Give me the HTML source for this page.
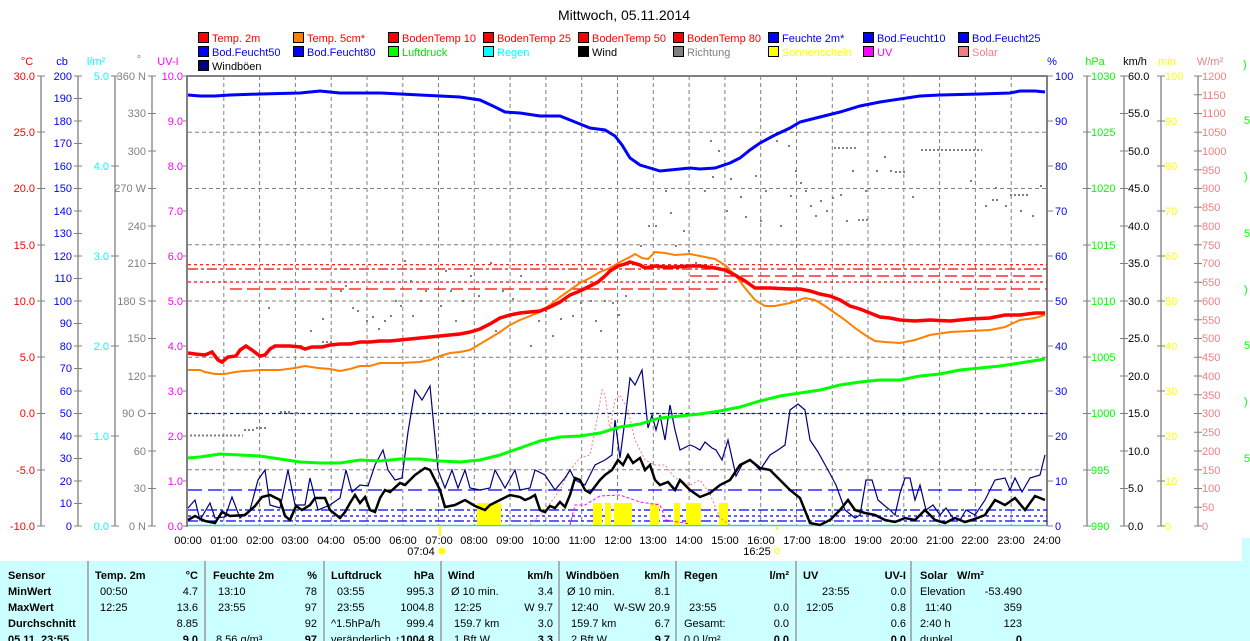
<!DOCTYPE html>
<html><head><meta charset="utf-8"><style>
html,body{margin:0;padding:0;background:#fff;width:1250px;height:641px;overflow:hidden}
svg{display:block}
text{font-family:"Liberation Sans",Arial,sans-serif;font-size:11px}
.b{font-weight:bold}
</style></head><body>
<svg width="1250" height="641" viewBox="0 0 1250 641">
<text x="624" y="20" text-anchor="middle" font-size="14" style="font-size:14px">Mittwoch, 05.11.2014</text>

<!-- legend -->
<g stroke="#000" stroke-width="1">
<rect x="198.5" y="32.5" width="10" height="10" fill="#f00"/><rect x="293.5" y="32.5" width="10" height="10" fill="#ff8000"/><rect x="388.5" y="32.5" width="10" height="10" fill="#f00"/><rect x="483.5" y="32.5" width="10" height="10" fill="#f00"/><rect x="578.5" y="32.5" width="10" height="10" fill="#f00"/><rect x="673.5" y="32.5" width="10" height="10" fill="#f00"/><rect x="768.5" y="32.5" width="10" height="10" fill="#00f"/><rect x="863.5" y="32.5" width="10" height="10" fill="#00f"/><rect x="958.5" y="32.5" width="10" height="10" fill="#00f"/>
<rect x="198.5" y="46.5" width="10" height="10" fill="#00f"/><rect x="293.5" y="46.5" width="10" height="10" fill="#00f"/><rect x="388.5" y="46.5" width="10" height="10" fill="#0f0"/><rect x="483.5" y="46.5" width="10" height="10" fill="#0ff"/><rect x="578.5" y="46.5" width="10" height="10" fill="#000"/><rect x="673.5" y="46.5" width="10" height="10" fill="#808080"/><rect x="768.5" y="46.5" width="10" height="10" fill="#ff0"/><rect x="863.5" y="46.5" width="10" height="10" fill="#f0f"/><rect x="958.5" y="46.5" width="10" height="10" fill="#f08080"/>
<rect x="198.5" y="60.5" width="10" height="10" fill="#000080"/>
</g>
<g>
<text x="212" y="42" fill="#f00">Temp. 2m</text><text x="307" y="42" fill="#f00">Temp. 5cm*</text><text x="402" y="42" fill="#f00">BodenTemp 10</text><text x="497" y="42" fill="#f00">BodenTemp 25</text><text x="592" y="42" fill="#f00">BodenTemp 50</text><text x="687" y="42" fill="#f00">BodenTemp 80</text><text x="782" y="42" fill="#00f">Feuchte 2m*</text><text x="877" y="42" fill="#00f">Bod.Feucht10</text><text x="972" y="42" fill="#00f">Bod.Feucht25</text>
<text x="212" y="56" fill="#00f">Bod.Feucht50</text><text x="307" y="56" fill="#00f">Bod.Feucht80</text><text x="402" y="56" fill="#0d0">Luftdruck</text><text x="497" y="56" fill="#0ff">Regen</text><text x="592" y="56" fill="#000">Wind</text><text x="687" y="56" fill="#808080">Richtung</text><text x="782" y="56" fill="#ff0">Sonnenschein</text><text x="877" y="56" fill="#f0f">UV</text><text x="972" y="56" fill="#f08080">Solar</text>
<text x="212" y="70" fill="#000">Windböen</text>
</g>

<!-- axis titles -->
<text x="27" y="65" fill="#f00" text-anchor="middle">°C</text>
<text x="62" y="65" fill="#00f" text-anchor="middle">cb</text>
<text x="96" y="65" fill="#0ff" text-anchor="middle">l/m²</text>
<text x="139" y="63" fill="#808080" text-anchor="middle">°</text>
<text x="168" y="65" fill="#f0f" text-anchor="middle">UV-I</text>
<text x="1052" y="65" fill="#00f" text-anchor="middle">%</text>
<text x="1095" y="65" fill="#0f0" text-anchor="middle">hPa</text>
<text x="1135" y="65" fill="#000" text-anchor="middle">km/h</text>
<text x="1167" y="65" fill="#ff0" text-anchor="middle">min</text>
<text x="1210" y="65" fill="#f08080" text-anchor="middle">W/m²</text>

<!-- axis lines -->
<g stroke="#808080" stroke-width="1.3">
<line x1="41" y1="76" x2="41" y2="526"/><line x1="78" y1="76" x2="78" y2="526"/><line x1="115" y1="76" x2="115" y2="526"/><line x1="152" y1="76" x2="152" y2="526"/>
<line x1="1087" y1="76" x2="1087" y2="526"/><line x1="1124" y1="76" x2="1124" y2="526"/><line x1="1161" y1="76" x2="1161" y2="526"/><line x1="1198" y1="76" x2="1198" y2="526"/>
</g>
<!-- left °C ticks -->
<g stroke="#808080">
<path d="M37 76h8M37 132h8M37 188.5h8M37 245h8M37 301h8M37 357h8M37 413.5h8M37 470h8M37 526h8"/>
<path d="M74 76h8M74 98.5h8M74 121h8M74 143.5h8M74 166h8M74 188.5h8M74 211h8M74 233.5h8M74 256h8M74 278.5h8M74 301h8M74 323.5h8M74 346h8M74 368.5h8M74 391h8M74 413.5h8M74 436h8M74 458.5h8M74 481h8M74 503.5h8M74 526h8"/>
<path d="M111 76h8M111 166h8M111 256h8M111 346h8M111 436h8M111 526h8"/>
<path d="M148 76h8M148 113.5h8M148 151h8M148 188.5h8M148 226h8M148 263.5h8M148 301h8M148 338.5h8M148 376h8M148 413.5h8M148 451h8M148 488.5h8M148 526h8"/>
<path d="M183 76h5M183 121h5M183 166h5M183 211h5M183 256h5M183 301h5M183 346h5M183 391h5M183 436h5M183 481h5M183 526h5"/>
<path d="M1047 76h6M1047 121h6M1047 166h6M1047 211h6M1047 256h6M1047 301h6M1047 346h6M1047 391h6M1047 436h6M1047 481h6M1047 526h6"/>
<path d="M1083 76h8M1083 132h8M1083 188.5h8M1083 245h8M1083 301h8M1083 357h8M1083 413.5h8M1083 470h8M1083 526h8"/>
<path d="M1120 76h8M1120 113.5h8M1120 151h8M1120 188.5h8M1120 226h8M1120 263.5h8M1120 301h8M1120 338.5h8M1120 376h8M1120 413.5h8M1120 451h8M1120 488.5h8M1120 526h8"/>
<path d="M1157 76h8M1157 121h8M1157 166h8M1157 211h8M1157 256h8M1157 301h8M1157 346h8M1157 391h8M1157 436h8M1157 481h8M1157 526h8"/>
<path d="M1194 76h8M1194 94.75h8M1194 113.5h8M1194 132.25h8M1194 151h8M1194 169.75h8M1194 188.5h8M1194 207.25h8M1194 226h8M1194 244.75h8M1194 263.5h8M1194 282.25h8M1194 301h8M1194 319.75h8M1194 338.5h8M1194 357.25h8M1194 376h8M1194 394.75h8M1194 413.5h8M1194 432.25h8M1194 451h8M1194 469.75h8M1194 488.5h8M1194 507.25h8M1194 526h8"/>
</g>
<!-- left labels -->
<g fill="#f00" text-anchor="end">
<text x="35" y="80">30.0</text><text x="35" y="136">25.0</text><text x="35" y="192">20.0</text><text x="35" y="249">15.0</text><text x="35" y="305">10.0</text><text x="35" y="361">5.0</text><text x="35" y="417">0.0</text><text x="35" y="474">-5.0</text><text x="35" y="530">-10.0</text>
</g>
<g fill="#00f" text-anchor="end">
<text x="72" y="80">200</text><text x="72" y="102">190</text><text x="72" y="125">180</text><text x="72" y="147">170</text><text x="72" y="170">160</text><text x="72" y="192">150</text><text x="72" y="215">140</text><text x="72" y="237">130</text><text x="72" y="260">120</text><text x="72" y="282">110</text><text x="72" y="305">100</text><text x="72" y="327">90</text><text x="72" y="350">80</text><text x="72" y="372">70</text><text x="72" y="395">60</text><text x="72" y="417">50</text><text x="72" y="440">40</text><text x="72" y="462">30</text><text x="72" y="485">20</text><text x="72" y="507">10</text><text x="72" y="530">0</text>
</g>
<g fill="#0ff" text-anchor="end">
<text x="109" y="80">5.0</text><text x="109" y="170">4.0</text><text x="109" y="260">3.0</text><text x="109" y="350">2.0</text><text x="109" y="440">1.0</text><text x="109" y="530">0.0</text>
</g>
<g fill="#808080" text-anchor="end">
<text x="146" y="80">360 N</text><text x="146" y="117">330</text><text x="146" y="155">300</text><text x="146" y="192">270 W</text><text x="146" y="230">240</text><text x="146" y="267">210</text><text x="146" y="305">180 S</text><text x="146" y="342">150</text><text x="146" y="380">120</text><text x="146" y="417">90 O</text><text x="146" y="455">60</text><text x="146" y="492">30</text><text x="146" y="530">0 N</text>
</g>
<g fill="#f0f" text-anchor="end">
<text x="183" y="80">10.0</text><text x="183" y="125">9.0</text><text x="183" y="170">8.0</text><text x="183" y="215">7.0</text><text x="183" y="260">6.0</text><text x="183" y="305">5.0</text><text x="183" y="350">4.0</text><text x="183" y="395">3.0</text><text x="183" y="440">2.0</text><text x="183" y="485">1.0</text><text x="183" y="530">0.0</text>
</g>
<!-- right labels -->
<g fill="#00f">
<text x="1055" y="80">100</text><text x="1055" y="125">90</text><text x="1055" y="170">80</text><text x="1055" y="215">70</text><text x="1055" y="260">60</text><text x="1055" y="305">50</text><text x="1055" y="350">40</text><text x="1055" y="395">30</text><text x="1055" y="440">20</text><text x="1055" y="485">10</text><text x="1055" y="530">0</text>
</g>
<g fill="#0f0">
<text x="1091" y="80">1030</text><text x="1091" y="136">1025</text><text x="1091" y="192">1020</text><text x="1091" y="249">1015</text><text x="1091" y="305">1010</text><text x="1091" y="361">1005</text><text x="1091" y="417">1000</text><text x="1091" y="474">995</text><text x="1091" y="530">990</text>
<text x="1243" y="68">)</text><text x="1244" y="124">5</text><text x="1244" y="180">)</text><text x="1244" y="237">5</text><text x="1244" y="293">)</text><text x="1244" y="349">5</text><text x="1244" y="405">)</text><text x="1244" y="462">5</text>
</g>
<g fill="#000">
<text x="1128" y="80">60.0</text><text x="1128" y="117">55.0</text><text x="1128" y="155">50.0</text><text x="1128" y="192">45.0</text><text x="1128" y="230">40.0</text><text x="1128" y="267">35.0</text><text x="1128" y="305">30.0</text><text x="1128" y="342">25.0</text><text x="1128" y="380">20.0</text><text x="1128" y="417">15.0</text><text x="1128" y="455">10.0</text><text x="1128" y="492">5.0</text><text x="1128" y="530">0.0</text>
</g>
<g fill="#ff0">
<text x="1165" y="80">100</text><text x="1165" y="125">90</text><text x="1165" y="170">80</text><text x="1165" y="215">70</text><text x="1165" y="260">60</text><text x="1165" y="305">50</text><text x="1165" y="350">40</text><text x="1165" y="395">30</text><text x="1165" y="440">20</text><text x="1165" y="485">10</text><text x="1165" y="530">0</text>
</g>
<g fill="#f08080">
<text x="1202" y="80">1200</text><text x="1202" y="99">1150</text><text x="1202" y="117">1100</text><text x="1202" y="136">1050</text><text x="1202" y="155">1000</text><text x="1202" y="174">950</text><text x="1202" y="192">900</text><text x="1202" y="211">850</text><text x="1202" y="230">800</text><text x="1202" y="249">750</text><text x="1202" y="267">700</text><text x="1202" y="286">650</text><text x="1202" y="305">600</text><text x="1202" y="324">550</text><text x="1202" y="342">500</text><text x="1202" y="361">450</text><text x="1202" y="380">400</text><text x="1202" y="399">350</text><text x="1202" y="417">300</text><text x="1202" y="436">250</text><text x="1202" y="455">200</text><text x="1202" y="474">150</text><text x="1202" y="492">100</text><text x="1202" y="511">50</text><text x="1202" y="530">0</text>
</g>

<!-- grid -->
<g stroke="#808080" stroke-dasharray="4,3" stroke-width="1">
<path d="M223.8 76V526M259.6 76V526M295.4 76V526M331.2 76V526M367 76V526M402.8 76V526M438.5 76V526M474.3 76V526M510.1 76V526M545.9 76V526M581.7 76V526M617.5 76V526M653.3 76V526M689.1 76V526M724.9 76V526M760.7 76V526M796.5 76V526M832.3 76V526M868 76V526M903.8 76V526M939.6 76V526M975.4 76V526M1011.2 76V526"/>
<path d="M188 132.3H1047M188 188.5H1047M188 244.8H1047M188 301H1047M188 357.3H1047M188 413.5H1047M188 469.8H1047"/>
</g>
<!-- frame -->
<path d="M187 75V527M188 76H1047V526" stroke="#808080" stroke-width="2" fill="none"/>
<line x1="188" y1="525.5" x2="1047" y2="525.5" stroke="#4cc" stroke-width="1.5"/>

<!-- horizontal reference dashes -->
<g fill="none" stroke-width="1.2">
<line x1="188" y1="264.7" x2="1047" y2="264.7" stroke="#f00" stroke-dasharray="3,3"/>
<line x1="188" y1="269" x2="1047" y2="269" stroke="#f00" stroke-dasharray="10,3,3,3"/>
<line x1="690" y1="276" x2="1047" y2="276" stroke="#f00" stroke-dasharray="12,5"/>
<line x1="188" y1="282" x2="1047" y2="282" stroke="#f00" stroke-dasharray="3,3"/>
<line x1="230" y1="289" x2="718" y2="289" stroke="#f00" stroke-dasharray="12,5"/>
<line x1="960" y1="289" x2="1047" y2="289" stroke="#f00" stroke-dasharray="12,5"/>
<line x1="188" y1="413.5" x2="1047" y2="413.5" stroke="#00f" stroke-dasharray="3,3"/>
<line x1="188" y1="490" x2="1047" y2="490" stroke="#00f" stroke-dasharray="14,6"/>
<line x1="188" y1="510" x2="1047" y2="510" stroke="#00f" stroke-dasharray="10,3,3,3"/>
<line x1="188" y1="516" x2="1047" y2="516" stroke="#00f" stroke-dasharray="3,3"/>
<line x1="188" y1="521" x2="1047" y2="521" stroke="#00f" stroke-dasharray="10,3,3,3"/>
</g>

<!-- Richtung gray dots -->
<g stroke="#808080" stroke-width="2" stroke-dasharray="2,2" fill="none">
<path d="M190 435.5H243M244 430H255M256 428H266M280 412H292M296 413H299M322 342H334M834 148H856M921 150H982M895 172H907M858 220H870M992 200H1000M1010 195H1030"/>
</g>
<g fill="#808080">
<rect x="268" y="307" width="2" height="2"/><rect x="300" y="345" width="2" height="2"/><rect x="310" y="330" width="2" height="2"/><rect x="322" y="318" width="2" height="2"/><rect x="330" y="300" width="2" height="2"/><rect x="340" y="290" width="2" height="2"/><rect x="345" y="285" width="2" height="2"/><rect x="352" y="307" width="2" height="2"/><rect x="357" y="310" width="2" height="2"/><rect x="366" y="320" width="2" height="2"/><rect x="372" y="316" width="2" height="2"/><rect x="378" y="328" width="2" height="2"/><rect x="384" y="320" width="2" height="2"/><rect x="390" y="315" width="2" height="2"/><rect x="395" y="300" width="2" height="2"/><rect x="400" y="305" width="2" height="2"/><rect x="404" y="260" width="2" height="2"/><rect x="410" y="280" width="2" height="2"/><rect x="412" y="315" width="2" height="2"/><rect x="420" y="300" width="2" height="2"/><rect x="425" y="290" width="2" height="2"/><rect x="430" y="264" width="2" height="2"/><rect x="440" y="305" width="2" height="2"/><rect x="445" y="270" width="2" height="2"/><rect x="450" y="290" width="2" height="2"/><rect x="455" y="320" width="2" height="2"/><rect x="462" y="300" width="2" height="2"/><rect x="470" y="275" width="2" height="2"/><rect x="478" y="295" width="2" height="2"/><rect x="490" y="262" width="2" height="2"/><rect x="495" y="330" width="2" height="2"/><rect x="502" y="290" width="2" height="2"/><rect x="512" y="298" width="2" height="2"/><rect x="520" y="275" width="2" height="2"/><rect x="530" y="345" width="2" height="2"/><rect x="538" y="320" width="2" height="2"/><rect x="545" y="310" width="2" height="2"/><rect x="552" y="335" width="2" height="2"/><rect x="560" y="318" width="2" height="2"/><rect x="565" y="300" width="2" height="2"/><rect x="572" y="315" width="2" height="2"/><rect x="580" y="302" width="2" height="2"/><rect x="590" y="300" width="2" height="2"/><rect x="595" y="320" width="2" height="2"/><rect x="600" y="330" width="2" height="2"/><rect x="604" y="300" width="2" height="2"/><rect x="612" y="302" width="2" height="2"/><rect x="618" y="314" width="2" height="2"/><rect x="625" y="295" width="2" height="2"/><rect x="640" y="245" width="2" height="2"/><rect x="648" y="225" width="2" height="2"/><rect x="655" y="225" width="2" height="2"/><rect x="665" y="190" width="2" height="2"/><rect x="670" y="212" width="2" height="2"/><rect x="675" y="245" width="2" height="2"/><rect x="683" y="230" width="2" height="2"/><rect x="688" y="250" width="2" height="2"/><rect x="695" y="262" width="2" height="2"/><rect x="704" y="190" width="2" height="2"/><rect x="710" y="140" width="2" height="2"/><rect x="712" y="176" width="2" height="2"/><rect x="718" y="150" width="2" height="2"/><rect x="726" y="210" width="2" height="2"/><rect x="730" y="178" width="2" height="2"/><rect x="740" y="196" width="2" height="2"/><rect x="745" y="216" width="2" height="2"/><rect x="755" y="175" width="2" height="2"/><rect x="760" y="220" width="2" height="2"/><rect x="765" y="190" width="2" height="2"/><rect x="776" y="140" width="2" height="2"/><rect x="780" y="225" width="2" height="2"/><rect x="788" y="145" width="2" height="2"/><rect x="790" y="195" width="2" height="2"/><rect x="795" y="170" width="2" height="2"/><rect x="800" y="182" width="2" height="2"/><rect x="805" y="190" width="2" height="2"/><rect x="810" y="205" width="2" height="2"/><rect x="815" y="215" width="2" height="2"/><rect x="820" y="200" width="2" height="2"/><rect x="826" y="210" width="2" height="2"/><rect x="832" y="197" width="2" height="2"/><rect x="840" y="194" width="2" height="2"/><rect x="846" y="220" width="2" height="2"/><rect x="852" y="170" width="2" height="2"/><rect x="865" y="190" width="2" height="2"/><rect x="876" y="170" width="2" height="2"/><rect x="884" y="156" width="2" height="2"/><rect x="890" y="170" width="2" height="2"/><rect x="912" y="196" width="2" height="2"/><rect x="970" y="180" width="2" height="2"/><rect x="985" y="205" width="2" height="2"/><rect x="995" y="187" width="2" height="2"/><rect x="1005" y="205" width="2" height="2"/><rect x="1020" y="210" width="2" height="2"/><rect x="1032" y="215" width="2" height="2"/><rect x="1040" y="185" width="2" height="2"/>
</g>

<!-- sunshine -->
<g fill="#ff0">
<rect x="477" y="503" width="24" height="22"/><rect x="593" y="503" width="9" height="22"/><rect x="605" y="503" width="6" height="22"/><rect x="614" y="503" width="18" height="22"/><rect x="650" y="503" width="9" height="22"/><rect x="674" y="503" width="6" height="22"/><rect x="686" y="503" width="15" height="22"/><rect x="719" y="503" width="9" height="22"/>
<rect x="439" y="526" width="2" height="10"/><rect x="776" y="526" width="2" height="4"/>
</g>

<!-- solar dotted -->
<polyline fill="none" stroke="#f08080" stroke-width="1" stroke-dasharray="2,2" points="530,525 545,510 560,490 570,470 580,458 590,455 597,420 602,390 605,395 610,430 615,400 620,395 628,410 635,440 645,460 655,465 665,465 675,478 690,485 700,480 710,494 720,518 730,525"/>
<polyline fill="none" stroke="#f0f" stroke-width="1" stroke-dasharray="3,2" points="570,525 575,505 585,505 600,496 620,495 640,502 660,505 666,520 690,524"/>

<!-- gusts navy -->
<polyline fill="none" stroke="#000080" stroke-width="1.2" points="188,508 195,500 200,520 210,503 215,518 225,517 232,497 240,518 250,510 258,480 265,470 270,505 280,508 288,470 295,505 305,505 310,478 318,510 330,505 340,498 346,470 352,492 360,485 368,486 375,465 383,450 388,470 395,480 402,478 408,432 415,390 422,400 430,386 438,470 445,488 452,470 458,488 465,470 470,488 480,490 490,488 495,470 505,488 515,470 520,490 530,488 535,470 545,475 555,490 565,478 570,470 575,480 585,485 595,465 605,460 612,455 615,420 620,458 625,420 630,378 635,385 642,370 648,428 652,415 656,430 660,415 665,440 670,405 675,430 680,450 690,445 695,447 700,450 705,442 712,448 716,450 722,460 728,440 736,476 742,465 750,460 760,470 770,455 778,450 785,445 790,410 798,404 805,410 810,440 818,452 828,470 836,485 845,510 855,518 860,515 866,480 872,480 878,500 885,506 890,510 895,515 900,493 905,478 910,478 915,500 920,485 926,510 933,505 940,515 946,508 953,518 960,520 966,510 975,515 985,500 995,480 1005,478 1010,490 1015,478 1022,492 1030,478 1040,475 1045,455"/>
<!-- wind black -->
<polyline fill="none" stroke="#000" stroke-width="2.5" points="188,520 195,516 205,521 215,523 222,512 230,516 245,515 255,506 262,497 270,495 280,500 285,516 290,520 296,506 302,510 310,505 315,498 325,498 330,510 335,514 340,518 345,512 350,503 355,495 360,503 365,497 370,510 375,512 380,498 385,490 390,492 400,483 405,485 415,475 425,468 430,470 435,480 440,490 445,507 455,505 465,500 475,506 485,510 490,505 500,500 510,495 520,497 525,500 530,498 535,495 540,510 545,512 550,506 555,508 560,502 565,507 570,495 575,478 580,480 585,490 590,493 600,480 605,475 612,470 618,460 623,465 628,455 633,463 640,458 645,470 650,465 655,480 660,485 668,482 675,490 680,480 690,490 700,497 710,493 720,485 730,480 740,465 750,460 760,468 770,470 780,480 790,490 800,498 810,523 820,525 830,520 840,510 848,500 855,510 865,513 875,515 885,520 895,522 905,518 915,520 925,510 935,520 945,523 955,518 965,522 975,519 985,515 995,500 1005,505 1015,498 1025,510 1035,496 1045,500"/>

<!-- pressure green -->
<polyline fill="none" stroke="#0f0" stroke-width="3" points="188,458 200,457 220,454 260,456 300,462 320,463 340,463 360,460 380,461 400,459 420,459 440,461 460,462 480,460 500,455 520,448 540,441 560,437 580,436 600,433 620,427 640,424 660,418 680,416 700,414 720,411 740,407 760,401 780,396 800,393 820,390 840,385 860,382 880,380 900,380 920,376 940,374 960,370 980,368 1000,366 1020,363 1045,359"/>
<!-- humidity blue -->
<polyline fill="none" stroke="#00f" stroke-width="3" points="188,95 200,96 215,96 230,95 260,94 300,93 320,91 340,93 380,93 420,95 460,97 480,100 495,107 505,112 520,113 540,116 560,116 575,122 590,128 605,130 615,136 622,145 630,158 640,165 650,168 660,171 670,170 690,168 700,169 715,168 730,163 740,158 750,150 760,143 775,135 790,128 800,122 820,117 840,112 860,106 880,102 900,99 920,96 940,95 980,94 1010,93 1020,91 1035,91 1045,92"/>
<!-- temp 5cm orange -->
<polyline fill="none" stroke="#ff8000" stroke-width="2" points="188,370 200,370 205,372 215,374 225,374 235,372 245,371 260,370 280,370 295,368 305,366 318,368 330,369 340,371 350,369 360,366 370,366 380,363 400,363 420,362 430,360 440,356 450,353 460,352 470,350 480,344 490,338 500,332 510,325 520,320 530,316 540,312 550,305 560,297 570,290 580,283 590,278 600,272 610,268 620,262 630,257 635,254 642,258 648,259 655,252 665,253 675,255 690,254 700,256 715,259 725,265 735,275 745,288 755,300 765,306 775,306 790,303 805,298 815,300 825,306 835,313 845,320 855,328 865,335 875,341 885,342 900,343 915,340 930,335 950,332 970,331 990,330 1005,327 1020,320 1035,318 1045,315"/>
<!-- temp 2m red -->
<polyline fill="none" stroke="#f00" stroke-width="3.5" points="188,353 195,354 205,355 212,352 218,360 222,362 228,357 236,356 240,350 246,346 252,350 260,356 265,355 270,349 275,346 290,346 300,347 305,349 312,347 322,347 330,345 340,344 350,344 360,342 370,342 380,341 390,341 400,340 410,339 420,338 430,337 440,336 450,335 460,334 470,332 480,329 490,324 500,318 510,315 520,313 530,312 540,311 550,307 560,302 570,295 580,291 590,286 598,282 605,276 610,271 618,266 625,264 630,262 640,265 645,268 655,266 665,267 675,267 690,266 700,266 715,268 725,270 735,275 745,281 755,288 770,288 790,289 800,289 810,291 820,294 830,296 840,300 850,306 860,309 870,313 880,317 890,318 900,320 915,321 930,320 950,321 970,319 990,318 1005,315 1020,315 1035,313 1045,313"/>

<!-- time labels -->
<g text-anchor="middle" fill="#000">
<text x="188" y="544">00:00</text><text x="224" y="544">01:00</text><text x="260" y="544">02:00</text><text x="295" y="544">03:00</text><text x="331" y="544">04:00</text><text x="367" y="544">05:00</text><text x="403" y="544">06:00</text><text x="439" y="544">07:00</text><text x="474" y="544">08:00</text><text x="510" y="544">09:00</text><text x="546" y="544">10:00</text><text x="582" y="544">11:00</text><text x="618" y="544">12:00</text><text x="653" y="544">13:00</text><text x="689" y="544">14:00</text><text x="725" y="544">15:00</text><text x="761" y="544">16:00</text><text x="797" y="544">17:00</text><text x="832" y="544">18:00</text><text x="868" y="544">19:00</text><text x="904" y="544">20:00</text><text x="940" y="544">21:00</text><text x="975" y="544">22:00</text><text x="1011" y="544">23:00</text><text x="1047" y="544">24:00</text>
<text x="421" y="555">07:04</text><text x="757" y="555">16:25</text>
</g>
<circle cx="442" cy="551" r="3.5" fill="#ff0"/><circle cx="777" cy="551" r="2.5" fill="none" stroke="#ff0"/>

<!-- table -->
<rect x="0" y="561" width="1242" height="80" fill="#ccffff"/>
<rect x="1242" y="538" width="8" height="103" fill="#ccffff"/>
<g stroke="#999" stroke-width="1.5"><path d="M88 561V641M205 561V641M324 561V641M441 561V641M559 561V641M676 561V641M796 561V641M911 561V641"/></g>
<g fill="#000">
<text class="b" x="8" y="579">Sensor</text><text class="b" x="8" y="595">MinWert</text><text class="b" x="8" y="611">MaxWert</text><text class="b" x="8" y="627">Durchschnitt</text><text class="b" x="8" y="643">05.11. 23:55</text>
<text class="b" x="95" y="579">Temp. 2m</text><text class="b" x="213" y="579">Feuchte 2m</text><text class="b" x="331" y="579">Luftdruck</text><text class="b" x="448" y="579">Wind</text><text class="b" x="566" y="579">Windböen</text><text class="b" x="684" y="579">Regen</text><text class="b" x="803" y="579">UV</text><text class="b" x="920" y="579">Solar</text>
<text x="100" y="595">00:50</text><text x="100" y="611">12:25</text>
<text x="218" y="595">13:10</text><text x="218" y="611">23:55</text><text x="216" y="643">8.56 g/m³</text>
<text x="337" y="595">03:55</text><text x="337" y="611">23:55</text><text x="331" y="627">^1.5hPa/h</text><text x="331" y="643">veränderlich</text>
<text x="451" y="595">Ø 10 min.</text><text x="454" y="611">12:25</text><text x="454" y="627">159.7 km</text><text x="454" y="643">1 Bft W</text>
<text x="567" y="595">Ø 10 min.</text><text x="571" y="611">12:40</text><text x="571" y="627">159.7 km</text><text x="571" y="643">2 Bft W</text>
<text x="689" y="611">23:55</text><text x="684" y="627">Gesamt:</text><text x="684" y="643">0.0 l/m²</text>
<text x="822" y="595">23:55</text><text x="806" y="611">12:05</text>
<text x="920" y="595">Elevation</text><text x="925" y="611">11:40</text><text x="920" y="627">2:40 h</text><text x="920" y="643">dunkel</text>
</g>
<g fill="#000" text-anchor="end">
<text class="b" x="198" y="579">°C</text><text class="b" x="317" y="579">%</text><text class="b" x="434" y="579">hPa</text><text class="b" x="553" y="579">km/h</text><text class="b" x="670" y="579">km/h</text><text class="b" x="789" y="579">l/m²</text><text class="b" x="906" y="579">UV-I</text><text class="b" x="957" y="579" text-anchor="start">W/m²</text>
<text x="198" y="595">4.7</text><text x="198" y="611">13.6</text><text x="198" y="627">8.85</text><text class="b" x="198" y="643">9.0</text>
<text x="317" y="595">78</text><text x="317" y="611">97</text><text x="317" y="627">92</text><text class="b" x="317" y="643">97</text>
<text x="434" y="595">995.3</text><text x="434" y="611">1004.8</text><text x="434" y="627">999.4</text><text class="b" x="434" y="643">↑1004.8</text>
<text x="553" y="595">3.4</text><text x="553" y="611">W 9.7</text><text x="553" y="627">3.0</text><text class="b" x="553" y="643">3.3</text>
<text x="670" y="595">8.1</text><text x="670" y="611">W-SW 20.9</text><text x="670" y="627">6.7</text><text class="b" x="670" y="643">9.7</text>
<text x="789" y="611">0.0</text><text x="789" y="627">0.0</text><text class="b" x="789" y="643">0.0</text>
<text x="906" y="595">0.0</text><text x="906" y="611">0.8</text><text x="906" y="627">0.6</text><text class="b" x="906" y="643">0.0</text>
<text x="1022" y="595">-53.490</text><text x="1022" y="611">359</text><text x="1022" y="627">123</text><text class="b" x="1022" y="643">0</text>
</g>
</svg>
</body></html>
